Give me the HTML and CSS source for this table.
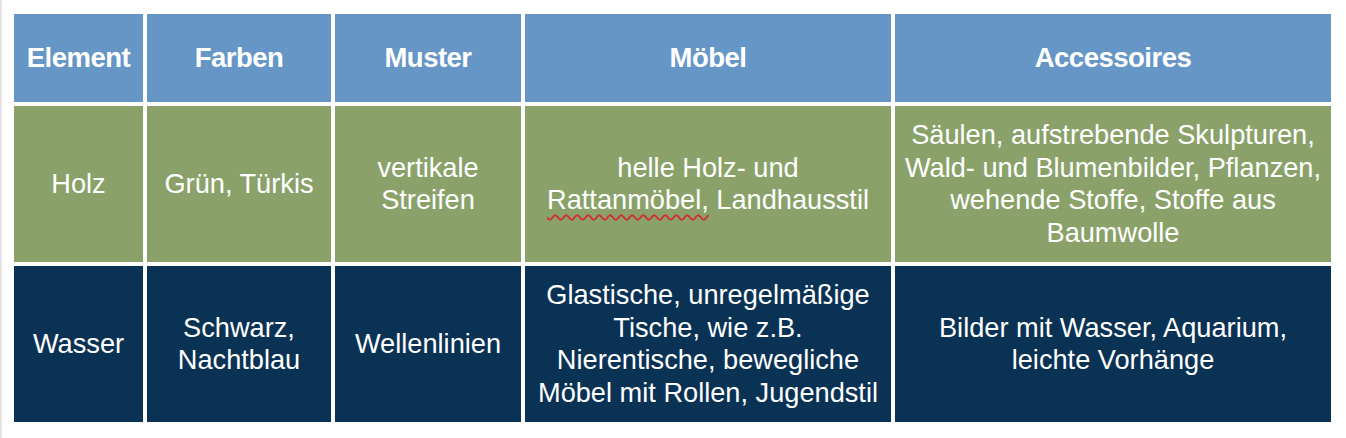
FILE: index.html
```html
<!DOCTYPE html>
<html lang="de">
<head>
<meta charset="utf-8">
<title>Elemente</title>
<link rel="stylesheet" href="styles.css">
</head>
<body>
<div class="page">
  <div class="table">
    <div class="cell head"><div>Element</div></div>
    <div class="cell head"><div>Farben</div></div>
    <div class="cell head"><div>Muster</div></div>
    <div class="cell head"><div>Möbel</div></div>
    <div class="cell head"><div>Accessoires</div></div>

    <div class="cell green"><div>Holz</div></div>
    <div class="cell green"><div>Grün, Türkis</div></div>
    <div class="cell green"><div>vertikale<br>Streifen</div></div>
    <div class="cell green"><div>helle Holz- und<br><span class="spell">Rattanmöbel,</span> Landhausstil</div></div>
    <div class="cell green"><div>Säulen, aufstrebende Skulpturen,<br>Wald- und Blumenbilder, Pflanzen,<br>wehende Stoffe, Stoffe aus<br>Baumwolle</div></div>

    <div class="cell navy"><div>Wasser</div></div>
    <div class="cell navy"><div>Schwarz,<br>Nachtblau</div></div>
    <div class="cell navy"><div>Wellenlinien</div></div>
    <div class="cell navy"><div>Glastische, unregelmäßige<br>Tische, wie z.B.<br>Nierentische, bewegliche<br>Möbel mit Rollen, Jugendstil</div></div>
    <div class="cell navy"><div>Bilder mit Wasser, Aquarium,<br>leichte Vorhänge</div></div>
  </div>
</div>
</body>
</html>
```

FILE: styles.css
```css
html, body {
  margin: 0;
  padding: 0;
  background: #ffffff;
}

.page {
  width: 1346px;
  height: 438px;
  box-sizing: border-box;
  border-left: 2px solid #e4e4e4;
  padding: 14px 0 0 12px;
  font-family: "Liberation Sans", Arial, Helvetica, sans-serif;
}

.table {
  display: grid;
  grid-template-columns: 129px 184px 186px 366px 436px;
  grid-template-rows: 88px 156px 156px;
  gap: 4px;
}

.cell {
  display: flex;
  align-items: center;
  justify-content: center;
  text-align: center;
  color: #ffffff;
  font-size: 27.2px;
  line-height: 32.5px;
  white-space: nowrap;
}

.head {
  background: #6596c6;
  font-size: 27.5px;
  font-weight: bold;
  letter-spacing: -0.5px;
}

.green {
  background: #8aa26a;
}

.navy {
  background: #0a3254;
}

.spell {
  text-decoration: underline wavy #d03030;
  text-decoration-thickness: 1.5px;
  text-underline-offset: 5px;
}
```
